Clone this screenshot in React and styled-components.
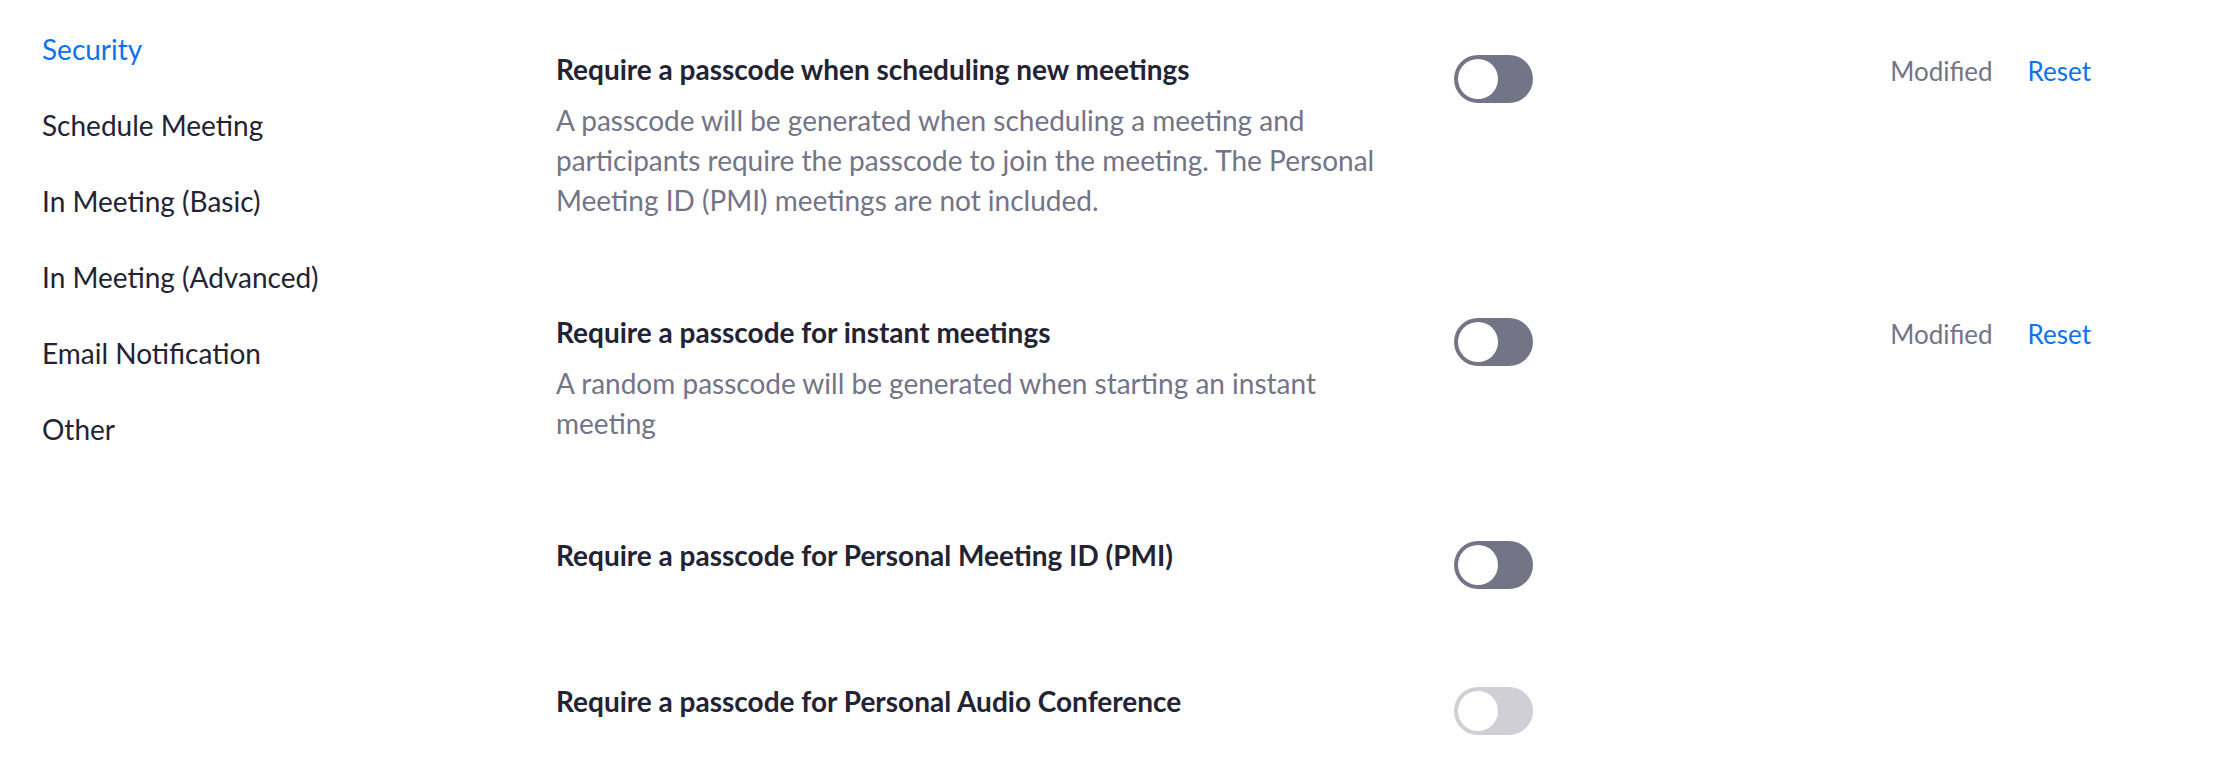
import React from "react";
import styled, { createGlobalStyle } from "styled-components";

const GlobalStyle = createGlobalStyle`
  html, body {
    margin: 0;
    padding: 0;
    background: #ffffff;
  }
  body {
    font-family: Lato, "Noto Sans", "Liberation Sans", sans-serif;
    color: #232333;
  }
`;

const Page = styled("div")`
  display: grid;
  grid-template-columns: 556px 1fr;
  width: 2220px;
  height: 772px;
  overflow: hidden;
`;

const Nav = styled("ul")`
  list-style: none;
  margin: 0;
  padding: 11px 0 0 42px;
`;

const NavItem = styled("li")`
  font-size: 28px;
  line-height: 40px;
  padding: 18px 0;
  color: ${(p) => (p.active ? "#0e72ed" : "#232333")};
  cursor: pointer;
`;

const Main = styled("div")`
  padding: 49px 129px 0 0;
`;

const Row = styled("div")`
  display: grid;
  grid-template-columns: 840px 79px 1fr;
  column-gap: 58px;
  align-items: start;
  padding-bottom: 92px;
`;

const TextBlock = styled("div")`
  display: flex;
  flex-direction: column;
`;

const Title = styled("div")`
  font-size: 28px;
  line-height: 40px;
  font-weight: 700;
  color: #232333;
`;

const Desc = styled("div")`
  margin-top: 11px;
  font-size: 28px;
  line-height: 40px;
  color: #747487;
`;

const Toggle = styled("div")`
  width: 79px;
  height: 48px;
  margin-top: 6px;
  border-radius: 24px;
  background: ${(p) => (p.disabled ? "#cfcfd5" : "#747487")};
  display: flex;
  align-items: center;
  padding: 0 4px;
  box-sizing: border-box;
`;

const Knob = styled("span")`
  width: 40px;
  height: 40px;
  border-radius: 50%;
  background: #ffffff;
`;

const Status = styled("div")`
  justify-self: end;
  display: flex;
  align-items: center;
  gap: 35px;
  font-size: 26px;
  line-height: 40px;
  margin-top: 2px;
`;

const Modified = styled("span")`
  color: #747487;
`;

const Reset = styled("a")`
  color: #0e72ed;
  cursor: pointer;
`;

const navItems = [
  "Security",
  "Schedule Meeting",
  "In Meeting (Basic)",
  "In Meeting (Advanced)",
  "Email Notification",
  "Other",
];

const settings = [
  {
    title: "Require a passcode when scheduling new meetings",
    desc: "A passcode will be generated when scheduling a meeting and participants require the passcode to join the meeting. The Personal Meeting ID (PMI) meetings are not included.",
    modified: true,
  },
  {
    title: "Require a passcode for instant meetings",
    desc: "A random passcode will be generated when starting an instant meeting",
    modified: true,
  },
  {
    title: "Require a passcode for Personal Meeting ID (PMI)",
  },
  {
    title: "Require a passcode for Personal Audio Conference",
    disabled: true,
  },
];

export default function App() {
  return (
    <>
      <GlobalStyle />
      <Page>
        <Nav>
          {navItems.map((item, i) => (
            <NavItem key={item} active={i === 0}>
              {item}
            </NavItem>
          ))}
        </Nav>
        <Main>
          {settings.map((s) => (
            <Row key={s.title}>
              <TextBlock>
                <Title>{s.title}</Title>
                {s.desc && <Desc>{s.desc}</Desc>}
              </TextBlock>
              <Toggle disabled={s.disabled}>
                <Knob />
              </Toggle>
              {s.modified ? (
                <Status>
                  <Modified>Modified</Modified>
                  <Reset>Reset</Reset>
                </Status>
              ) : (
                <span />
              )}
            </Row>
          ))}
        </Main>
      </Page>
    </>
  );
}
